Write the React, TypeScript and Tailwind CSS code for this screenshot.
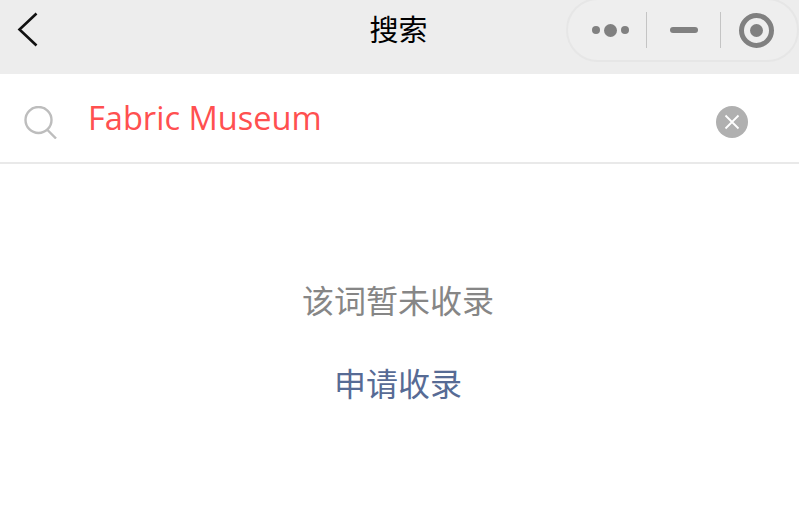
import React from 'react';

const cjk = "font-['Open_Sans','Noto_Sans_CJK_SC',sans-serif]";

const Capsule = () => {
  return (
    <div className="absolute right-[0px] top-[-2px] flex h-[64px] w-[233px] items-center rounded-[32px] border-2 border-[#e6e6e6] bg-[#eeeeee]">
      <div className="flex w-[78px] items-center justify-center gap-[4px] pl-[6px]">
        <span className="h-[8px] w-[8px] rounded-full bg-[#808080]"></span>
        <span className="h-[13px] w-[13px] rounded-full bg-[#808080]"></span>
        <span className="h-[8px] w-[8px] rounded-full bg-[#808080]"></span>
      </div>
      <div className="h-[36px] w-px bg-[#c4c4c4]"></div>
      <div className="flex w-[73px] items-center justify-center">
        <span className="h-[6px] w-[28px] rounded-full bg-[#808080]"></span>
      </div>
      <div className="h-[36px] w-px bg-[#c4c4c4]"></div>
      <div className="flex flex-1 items-center justify-center pr-[5px]">
        <span className="flex h-[35px] w-[35px] items-center justify-center rounded-full border-[5px] border-[#808080]">
          <span className="h-[13px] w-[13px] rounded-full bg-[#808080]"></span>
        </span>
      </div>
    </div>
  );
};

export default function App() {
  return (
    <div className={`h-[523px] w-[799px] overflow-hidden bg-white ${cjk}`}>
      {/* Title bar */}
      <div className="relative flex h-[74px] items-start justify-center bg-[#ededed] pr-[2px] pt-[10px]">
        <svg className="absolute left-[17px] top-[12px]" width="22" height="35" viewBox="0 0 22 35" fill="none">
          <path d="M19.5 1.5 L2.5 17.5 L19.5 33.5" stroke="#111" strokeWidth="2.6" />
        </svg>
        <span className="text-[29px] leading-[40px] text-black">搜索</span>
        <Capsule />
      </div>

      {/* Search row */}
      <div className="flex h-[90px] items-center border-b-2 border-[#e9e9e9] pl-[24px] pr-[51px]">
        <svg className="mt-[8px] shrink-0" width="33" height="33" viewBox="0 0 33 33" fill="none">
          <circle cx="14.5" cy="14" r="13" stroke="#bdbdbd" strokeWidth="2.4" />
          <path d="M23.5 24 L32 32.5" stroke="#bdbdbd" strokeWidth="2.4" />
        </svg>
        <span className="ml-[31px] flex-1 text-[32.6px] leading-[44px] text-[#ff5050]">Fabric Museum</span>
        <span className="mt-[8px] flex h-[32px] w-[32px] items-center justify-center rounded-full bg-[#b0b0b0]">
          <svg width="16" height="16" viewBox="0 0 16 16" fill="none">
            <path d="M1.5 1.5 L14.5 14.5 M14.5 1.5 L1.5 14.5" stroke="#fff" strokeWidth="1.8" />
          </svg>
        </span>
      </div>

      {/* Empty state */}
      <div className="flex flex-col items-center pr-[3px] pt-[115px]">
        <p className="text-[32px] leading-[44px] text-[#868686]">该词暂未收录</p>
        <p className="mt-[39px] text-[32px] leading-[44px] text-[#576b95]">申请收录</p>
      </div>
    </div>
  );
}
